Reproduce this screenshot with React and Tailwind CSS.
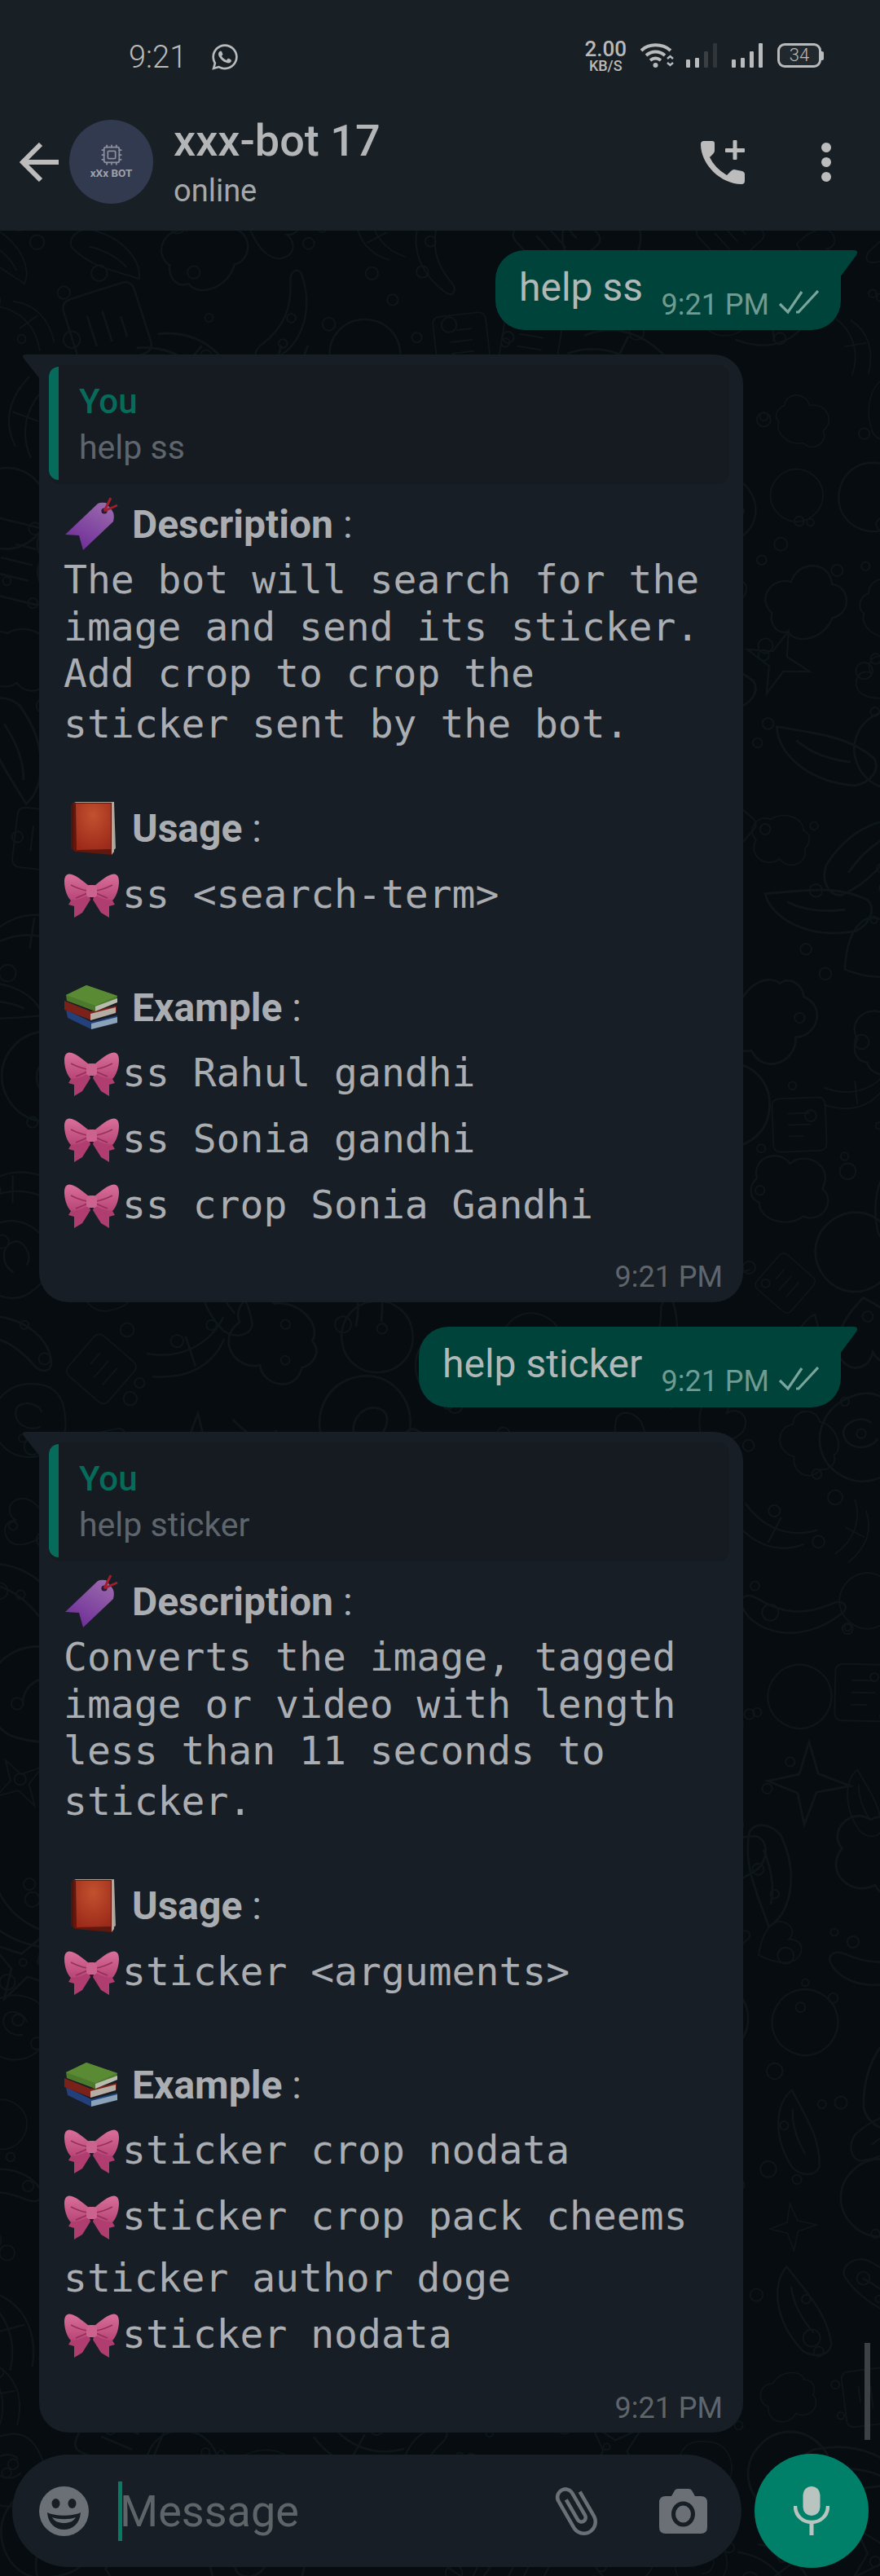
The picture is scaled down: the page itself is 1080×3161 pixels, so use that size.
import React from "react";
import { FaWhatsapp } from "react-icons/fa";
import { MdAttachFile } from "react-icons/md";
import { Cpu } from "lucide-react";

const SHAPES = [
  "M0 40C-10 10 30-20 60 0C90 20 80 60 50 70C20 80 8 65 0 40Z M25 30C35 20 55 25 55 40C55 50 35 55 28 45",
  "M30 0L38 26L66 32L40 42L32 70L24 42L-4 34L22 26Z",
  "M30 62C0 40-6 18 10 8C20 2 28 8 30 16C34 6 44 2 52 8C66 20 58 42 30 62Z",
  "M0 50C20 70 70 60 90 10C92 2 84 0 78 6C60 30 40 40 10 38C0 38-4 44 0 50Z",
  "M10 10H60Q70 10 70 20V70Q70 80 60 80H10Q0 80 0 70V20Q0 10 10 10Z M20 30H50M20 45H50M20 60H40",
  "M10 40C0 20 25 5 40 18C55 0 85 12 78 36C95 45 85 72 65 68C50 85 20 80 18 64C5 62 4 48 10 40Z",
  "M0 60C10 20 40 0 60 4C50 30 44 60 20 80C10 84 0 74 0 60Z M20 60C26 40 36 26 46 18",
  "M35 0C55 0 70 15 70 35C70 55 55 70 35 70C15 70 0 55 0 35C0 15 15 0 35 0Z",
  "M0 0C20 20 26 50 10 80M20 6C40 24 46 50 32 82M6 40H36",
];
function buildDoodles() {
  let seed = 7;
  const rnd = () => {
    seed = (seed * 16807) % 2147483647;
    return seed / 2147483647;
  };
  const items = [];
  for (let y = -40; y < 2900; y += 105) {
    for (let x = -30; x < 1090; x += 105) {
      items.push({
        k: items.length,
        x: x + rnd() * 45,
        y: y + rnd() * 45,
        r: rnd() * 360,
        s: 0.8 + rnd() * 0.7,
        d: SHAPES[Math.floor(rnd() * SHAPES.length)],
        c1: { x: x + rnd() * 100, y: y + rnd() * 100, r: 4 + rnd() * 4 },
        c2: { x: x + rnd() * 100, y: y + rnd() * 100, r: 4 + rnd() * 7 },
      });
    }
  }
  return items;
}
const DOODLES = buildDoodles();

function Wallpaper() {
  return (
    <svg className="absolute left-0 top-[283px] w-[1080px] h-[2878px]" viewBox="0 0 1080 2878" fill="none" stroke="#0f161a" strokeWidth="2">
      {DOODLES.map((i) => (
        <g key={i.k}>
          <path d={i.d} transform={`translate(${i.x} ${i.y}) rotate(${i.r} 35 35) scale(${i.s})`} />
          <circle cx={i.c1.x} cy={i.c1.y} r={i.c1.r} />
          <circle cx={i.c2.x} cy={i.c2.y} r={i.c2.r} />
        </g>
      ))}
    </svg>
  );
}

function TagEmoji() {
  return (
    <svg width="66" height="66" viewBox="0 0 66 66" className="-mt-[4px] ml-[1px]">
      <defs>
        <linearGradient id="tagG" x1="0.8" y1="0" x2="0.2" y2="1">
          <stop offset="0" stopColor="#9a68ad" />
          <stop offset="1" stopColor="#6c2b96" />
        </linearGradient>
      </defs>
      <path d="M40 8Q43 6 50 7L58 17Q61 22 59 30L22 65L17 47L0 46Z" fill="url(#tagG)" />
      <circle cx="48" cy="17" r="3.6" fill="#2c1a33" />
      <path d="M48 17L56 1M48 17L64 10" stroke="#a11e2c" strokeWidth="3" fill="none" />
    </svg>
  );
}
function BookEmoji() {
  return (
    <svg width="56" height="66" viewBox="0 0 56 66" className="-mt-[4px] ml-[8px]">
      <defs>
        <radialGradient id="bookG" cx="0.5" cy="0.25" r="0.8">
          <stop offset="0" stopColor="#c2512f" />
          <stop offset="1" stopColor="#9c2a1a" />
        </radialGradient>
      </defs>
      <path d="M2 3L6 1H53L55 58L50 62L48 60L48 3Z" fill="#a9a39a" />
      <path d="M0 5L3 2V60L0 58Z" fill="#4f140c" />
      <path d="M3 2H50V66L5 62L3 60Z" fill="#5f170e" />
      <path d="M6 3H49V59L7 60Z" fill="url(#bookG)" />
      <path d="M50 3L53 1V62L50 66Z" fill="#b3a89c" />
    </svg>
  );
}
function BooksEmoji() {
  return (
    <svg width="66" height="56" viewBox="0 0 66 56" className="mt-[1px]">
      <path d="M2 31L33 46L65 38V45L33 55L4 41Z" fill="#23407a" />
      <path d="M33 48L65 40V47L33 55Z" fill="#8aa3b8" />
      <path d="M0 20L32 33L64 26L64 34L33 44L0 31Z" fill="#7a2219" />
      <path d="M32 36L63 28V35L32 44Z" fill="#b6aea4" />
      <path d="M2 13L27 1L65 14L64 20L38 33L3 20Z" fill="#4c7a2c" />
      <path d="M27 1L65 14L38 26L2 13Z" fill="#5b8a35" />
      <path d="M38 27L65 17V22L38 33Z" fill="#b8bcae" />
    </svg>
  );
}
function BowEmoji() {
  return (
    <svg width="67" height="54" viewBox="0 0 67 54" className="mt-[4px] mr-[4px] shrink-0">
      <defs>
        <linearGradient id="bowG" x1="0" y1="0" x2="0" y2="1">
          <stop offset="0" stopColor="#d8709a" />
          <stop offset="1" stopColor="#b84577" />
        </linearGradient>
      </defs>
      <path d="M30 26L8 33L5 38L12 40L12 54L22 48L32 32Z" fill="#b03d70" />
      <path d="M37 26L59 33L62 38L55 40L55 54L45 48L35 32Z" fill="#b03d70" />
      <path d="M30 15C24 10 16 3 9 1C3-1 0 3 0 10C0 18 3 28 8 33C14 33 24 30 30 26Z" fill="url(#bowG)" />
      <path d="M37 15C43 10 51 3 58 1C64-1 67 3 67 10C67 18 64 28 59 33C53 33 43 30 37 26Z" fill="url(#bowG)" />
      <path d="M8 14C14 17 22 20 28 21M59 14C53 17 45 20 39 21M14 30C19 28 24 26 28 24M53 30C48 28 43 26 39 24" stroke="#963059" strokeWidth="1.5" fill="none" />
      <rect x="27" y="14" width="13" height="15" rx="4" fill="#cc628e" />
    </svg>
  );
}

function Bow({ h, children }) {
  return (
    <div className={`flex pl-[31px] ${h}`}>
      <BowEmoji />
      <span>{children}</span>
    </div>
  );
}

function Heading({ h, icon, label }) {
  return (
    <div className={`flex pl-[31px] font-[family-name:Roboto] ${h}`}>
      <div className="w-[83px] shrink-0">{icon}</div>
      <span className="whitespace-pre mt-[1px]">
        <b className="font-bold">{label}</b> :
      </span>
    </div>
  );
}

function Ticks({ className }) {
  return (
    <svg width="49" height="30" viewBox="0 0 49 30" fill="none" stroke="#7aa59c" strokeWidth="3.2" className={className}>
      <path d="M1 17L11 27L28 2" />
      <path d="M21 27L24 27L48 1" />
    </svg>
  );
}

function Sent({ width, height, children }) {
  return (
    <div className="flex justify-end pr-[48px]">
      <div className={`relative ${width} ${height} bg-[#00433a] rounded-l-[36px] rounded-br-[36px]`}>
        <svg width="22" height="34" viewBox="0 0 22 34" className="absolute -right-[21px] top-0">
          <path d="M0 0H17Q23 0 20 6L0 33Z" fill="#00433a" />
        </svg>
        <div className="flex justify-between pl-[29px] pr-[27px] pt-[17px]">
          <span className="text-[48px] leading-[58px] text-[#b0b9b7] font-[family-name:Roboto]">{children}</span>
          <div className="flex items-start mt-[31px]">
            <span className="text-[36px] leading-[40px] text-[#6f9b92] mt-[-1px]">9:21 PM</span>
            <Ticks className="ml-[12px] mt-[1px]" />
          </div>
        </div>
      </div>
    </div>
  );
}

function Received({ height, quote, children }) {
  return (
    <div className={`relative ml-[48px] w-[864px] ${height} bg-[#171e25] rounded-r-[36px] rounded-bl-[36px]`}>
      <svg width="22" height="30" viewBox="0 0 22 30" className="absolute -left-[21px] top-0">
        <path d="M22 0H5Q-1 0 2 5L22 30Z" fill="#171e25" />
      </svg>
      <div className="pt-[13px] pl-[12px] pr-[17px]">
        <div className="flex h-[146px] bg-[#151b21] rounded-[14px] overflow-hidden">
          <div className="w-[12px] h-[139px] mt-[2px] bg-[#066b5a] rounded-l-[12px]" />
          <div className="pl-[25px] font-[family-name:Roboto]">
            <div className="text-[42px] leading-[50px] font-medium text-[#066b5a] mt-[20px]">You</div>
            <div className="text-[41px] leading-[48px] text-[#5f656c] mt-[7px]">{quote}</div>
          </div>
        </div>
      </div>
      <div className="mt-[20px] text-[48px] leading-[58px] text-[#aaadb1] font-[family-name:'DejaVu_Sans_Mono'] whitespace-pre">
        {children}
      </div>
      <div className="pr-[25px] text-right text-[36px] leading-[40px] text-[#5f656b] font-[family-name:Roboto]">9:21 PM</div>
    </div>
  );
}

function Line({ h, children }) {
  return <div className={`pl-[30px] ${h}`}>{children}</div>;
}

function Signal({ dim }) {
  return (
    <svg width="38" height="30" viewBox="0 0 38 30" fill="#b9babb">
      <rect x="0" y="20" width="5" height="10" rx="1" />
      <rect x="11" y="18" width="5" height="12" rx="1" />
      <rect x="22" y="10" width="5" height="20" rx="1" fill={dim ? "#3a3f43" : "#b9babb"} />
      <rect x="33" y="0" width="5" height="30" rx="1" fill={dim ? "#2f3539" : "#b9babb"} />
    </svg>
  );
}

function Wifi() {
  return (
    <svg width="42" height="30" viewBox="0 0 42 30" fill="none" stroke="#b9babb" strokeWidth="4">
      <path d="M1 9C10 0 27 0 37 9" />
      <path d="M7 15C14 9 23 9 30 15" />
      <path d="M12 21C16 18 21 18 25 21" />
      <circle cx="18.5" cy="27" r="3" fill="#b9babb" stroke="none" />
      <path d="M33 19L36.5 16L40 19M33 24L36.5 27L40 24" strokeWidth="2.4" />
    </svg>
  );
}

function CallAdd() {
  return (
    <svg width="55" height="55" viewBox="0 0 55 55" fill="#bcbcbc">
      <path d="M4 1H14Q17 1 17 4V13Q17 15 15 17L11 21Q17 34 32 43L37 38Q39 36 41 36L51 38Q54 39 54 42V50Q54 54 50 54C25 54 0 30 0 5Q0 1 4 1Z" />
      <rect x="30" y="10" width="24" height="5" rx="1" />
      <rect x="39.5" y="0" width="5" height="24" rx="1" />
    </svg>
  );
}

function Smiley() {
  return (
    <svg width="61" height="61" viewBox="0 0 61 61">
      <circle cx="30.5" cy="30.5" r="30.5" fill="#6a7075" />
      <ellipse cx="20.5" cy="21" rx="5" ry="6" fill="#171e25" />
      <ellipse cx="40.5" cy="21" rx="5" ry="6" fill="#171e25" />
      <path d="M10 32C20 37 41 37 51 32C50 46 41 53 30.5 53C20 53 11 46 10 32Z" fill="#171e25" />
      <path d="M16 38C24 41 37 41 45 38C42 43 37 45 30.5 45C24 45 19 43 16 38Z" fill="#6a7075" />
    </svg>
  );
}

function Camera() {
  return (
    <svg width="59" height="55" viewBox="0 0 59 55">
      <path d="M8 9H15L19 2Q20 0 23 0H36Q39 0 40 2L44 9H51Q59 9 59 17V47Q59 55 51 55H8Q0 55 0 47V17Q0 9 8 9Z" fill="#6a7075" />
      <ellipse cx="29.5" cy="31" rx="12" ry="13" fill="none" stroke="#171e25" strokeWidth="5" />
    </svg>
  );
}

function Mic() {
  return (
    <svg width="44" height="60" viewBox="0 0 44 60" fill="#b9c4c0">
      <rect x="11.5" y="0" width="21" height="36" rx="10.5" />
      <path d="M2 24C2 36 11 44 22 44C33 44 42 36 42 24" fill="none" stroke="#b9c4c0" strokeWidth="4.5" />
      <rect x="19.5" y="43" width="5" height="17" />
    </svg>
  );
}

export default function App() {
  return (
    <div className="relative w-[1080px] h-[3161px] overflow-hidden bg-[#060c10] font-[family-name:Roboto]">
      <Wallpaper />

      <header className="relative h-[283px] bg-[#182026]">
        <div className="flex items-start h-[138px] pl-[158px] pr-[69px] pt-[48px] text-[#b9babb]">
          <span className="text-[38px] leading-[44px] font-light w-[100px]">9:21</span>
          <FaWhatsapp className="w-[36px] h-[36px] mt-[4px] text-[#b9babb]" />
          <div className="flex-1" />
          <div className="flex flex-col items-center mt-[1px] font-medium">
            <span className="text-[26px] leading-[22px]">2.00</span>
            <span className="text-[18px] leading-[16px] mt-[2px]">KB/S</span>
          </div>
          <div className="flex items-start ml-[17px] mt-[5px]">
            <Wifi />
            <div className="ml-[14px]"><Signal dim /></div>
            <div className="ml-[18px]"><Signal /></div>
            <div className="flex items-center ml-[18px]">
              <div className="w-[54px] h-[30px] border-[3px] border-[#b9babb] rounded-[9px] bg-[#22292e] flex items-center justify-center text-[22px] leading-none font-light">34</div>
              <div className="w-[3px] h-[11px] bg-[#b9babb] rounded-r-[2px]" />
            </div>
          </div>
        </div>
        <div className="flex items-start h-[145px]">
          <svg width="48" height="48" viewBox="0 0 48 48" fill="none" stroke="#bcbcbc" strokeWidth="6" className="ml-[24px] mt-[37px]">
            <path d="M48 24H4M26 2L4 24L26 46" />
          </svg>
          <div className="ml-[13px] mt-[9px] w-[103px] h-[103px] rounded-full bg-[#323a50] flex flex-col items-center pt-[29px]">
            <Cpu size={28} strokeWidth={1.5} className="text-[#8d909c]" />
            <span className="text-[13.5px] leading-[14px] font-bold text-[#a0a2ab] mt-[1px]">xXx BOT</span>
          </div>
          <div className="ml-[25px] mt-[5px]">
            <div className="text-[54px] leading-[60px] font-medium text-[#b3b5b7]">xxx-bot 17</div>
            <div className="text-[38px] leading-[44px] mt-[9px] text-[#a5a8aa]">online</div>
          </div>
          <div className="flex-1" />
          <div className="mt-[34px]"><CallAdd /></div>
          <div className="ml-[93px] mr-[60px] mt-[37px] flex flex-col gap-[6px]">
            <div className="w-[12px] h-[12px] rounded-full bg-[#bcbcbc]" />
            <div className="w-[12px] h-[12px] rounded-full bg-[#bcbcbc]" />
            <div className="w-[12px] h-[12px] rounded-full bg-[#bcbcbc]" />
          </div>
        </div>
      </header>

      <main className="relative flex flex-col pt-[24px] gap-[30px]">
        <Sent width="w-[424px]" height="h-[98px]">help ss</Sent>

        <Received height="h-[1163px]" quote="help ss">
          <Heading h="h-[68px]" icon={<TagEmoji />} label="Description" />
          <Line h="h-[58px]">The bot will search for the</Line>
          <Line h="h-[57px]">image and send its sticker.</Line>
          <Line h="h-[62px]">Add crop to crop the</Line>
          <Line h="h-[128px]">sticker sent by the bot.</Line>
          <Heading h="h-[81px]" icon={<BookEmoji />} label="Usage" />
          <Bow h="h-[139px]">ss &lt;search-term&gt;</Bow>
          <Heading h="h-[80px]" icon={<BooksEmoji />} label="Example" />
          <Bow h="h-[81px]">ss Rahul gandhi</Bow>
          <Bow h="h-[81px]">ss Sonia gandhi</Bow>
          <Bow h="h-[98px]">ss crop Sonia Gandhi</Bow>
        </Received>

        <Sent width="w-[518px]" height="h-[99px]">help sticker</Sent>

        <Received height="h-[1228px]" quote="help sticker">
          <Heading h="h-[68px]" icon={<TagEmoji />} label="Description" />
          <Line h="h-[58px]">Converts the image, tagged</Line>
          <Line h="h-[57px]">image or video with length</Line>
          <Line h="h-[62px]">less than 11 seconds to</Line>
          <Line h="h-[128px]">sticker.</Line>
          <Heading h="h-[81px]" icon={<BookEmoji />} label="Usage" />
          <Bow h="h-[139px]">sticker &lt;arguments&gt;</Bow>
          <Heading h="h-[80px]" icon={<BooksEmoji />} label="Example" />
          <Bow h="h-[81px]">sticker crop nodata</Bow>
          <Bow h="h-[76px]">sticker crop pack cheems</Bow>
          <Line h="h-[69px]">sticker author doge</Line>
          <Bow h="h-[100px]">sticker nodata</Bow>
        </Received>
      </main>

      <footer className="relative flex items-center mt-[26px] pl-[15px]">
        <div className="flex items-center w-[895px] h-[138px] bg-[#171e25] rounded-[69px] pl-[33px] pr-[42px]">
          <Smiley />
          <div className="w-[5px] h-[73px] ml-[36px] bg-[#067a63]" />
          <span className="text-[54px] leading-[60px] text-[#5e6468] flex-1 mt-[2px] -ml-[3px]">Message</span>
          <MdAttachFile className="w-[72px] h-[72px] -rotate-[30deg] text-[#6a7075] mr-[66px]" />
          <Camera />
        </div>
        <div className="ml-[16px] w-[140px] h-[140px] rounded-full bg-[#008069] flex items-center justify-center">
          <Mic />
        </div>
      </footer>

      <div className="absolute left-[1061px] top-[2875px] w-[7px] h-[119px] bg-[#3b4145]" />
    </div>
  );
}
